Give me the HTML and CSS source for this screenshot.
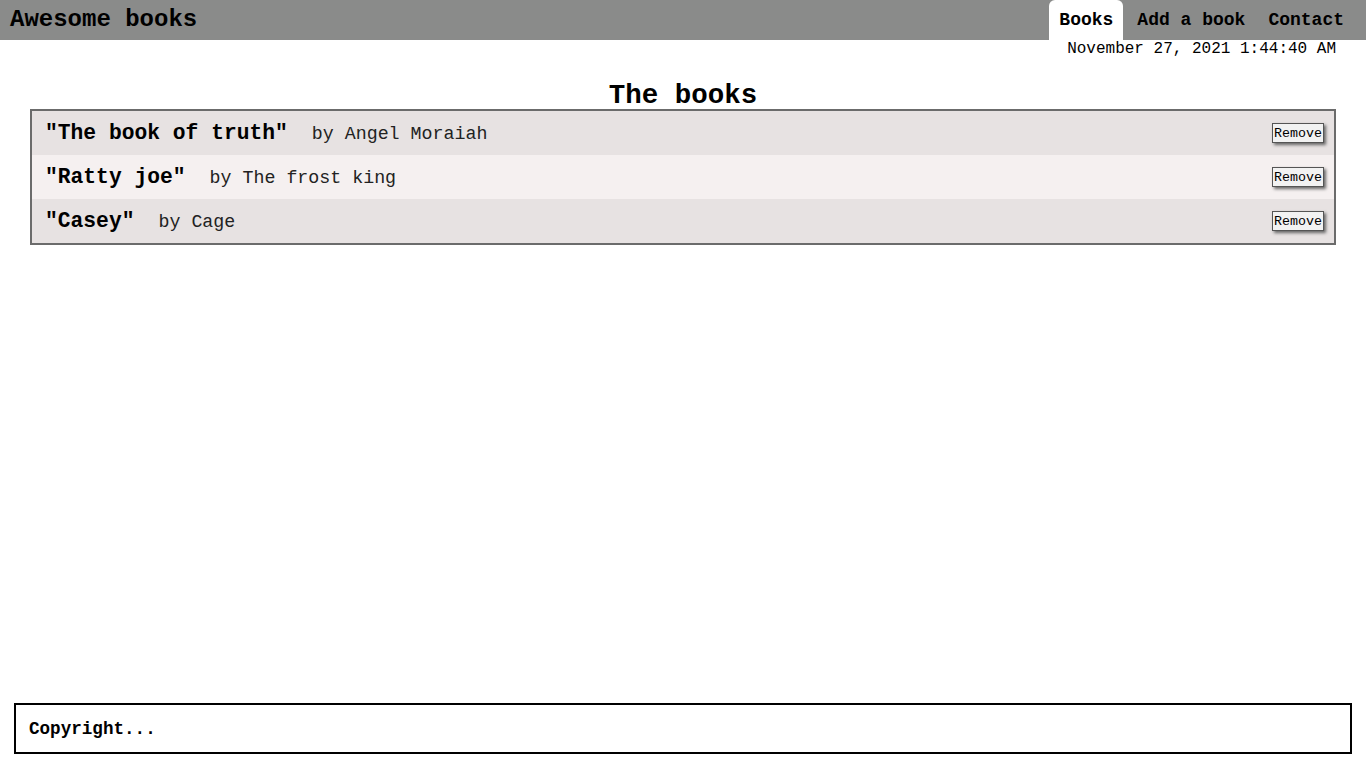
FILE: index.html
```html
<!DOCTYPE html>
<html lang="en">
<head>
<meta charset="utf-8">
<title>Awesome books</title>
<link rel="stylesheet" href="styles.css">
</head>
<body>
<header class="topbar">
  <h1 class="logo">Awesome books</h1>
  <nav class="nav">
    <a class="tab active" href="#">Books</a>
    <a class="tab" href="#">Add a book</a>
    <a class="tab" href="#">Contact</a>
  </nav>
</header>
<div class="date">November 27, 2021 1:44:40 AM</div>
<main class="main">
  <h2 class="title">The books</h2>
  <ul class="books">
    <li class="book">
      <div class="info"><span class="book-title">"The book of truth"</span><span class="author">by Angel Moraiah</span></div>
      <button class="remove">Remove</button>
    </li>
    <li class="book">
      <div class="info"><span class="book-title">"Ratty joe"</span><span class="author">by The frost king</span></div>
      <button class="remove">Remove</button>
    </li>
    <li class="book">
      <div class="info"><span class="book-title">"Casey"</span><span class="author">by Cage</span></div>
      <button class="remove">Remove</button>
    </li>
  </ul>
</main>
<footer class="footer">Copyright...</footer>
</body>
</html>
```
FILE: styles.css
```css
* { box-sizing: border-box; }
html, body { height: 100%; }
body {
  margin: 0;
  font-family: "Liberation Mono", "Courier New", monospace;
  color: #000;
  background: #fff;
  display: flex;
  flex-direction: column;
}
.topbar {
  height: 40px;
  background: #8a8b8a;
  display: flex;
  align-items: stretch;
  justify-content: space-between;
  padding: 0 12px 0 10px;
}
.logo {
  margin: 0;
  font-size: 24px;
  font-weight: bold;
  line-height: 40px;
}
.nav {
  display: flex;
  align-items: flex-end;
  gap: 3px;
}
.tab {
  display: block;
  height: 40px;
  line-height: 40px;
  padding: 0 10px;
  font-size: 18px;
  font-weight: bold;
  color: #000;
  text-decoration: none;
  border-radius: 6px 6px 0 0;
}
.tab.active { background: #fff; margin-right: 1px; }
.date {
  font-size: 16px;
  padding: 0 30px 0 0;
  line-height: 18px;
  height: 38px;
  display: flex;
  justify-content: flex-end;
  align-items: flex-start;
}
.main {
  flex: 1;
  padding: 0 30px;
}
.title {
  margin: 0;
  text-align: center;
  font-size: 27.5px;
  line-height: 31px;
  padding-top: 2px;
  height: 31px;
  font-weight: bold;
}
.books {
  list-style: none;
  margin: 0;
  padding: 0;
  border: 2px solid #6b6b6b;
}
.book {
  height: 44px;
  display: flex;
  align-items: center;
  justify-content: space-between;
  padding: 0 10px 0 13px;
  background: #e7e2e2;
}
.book:nth-child(even) { background: #f5f0f0; }
.info { display: flex; align-items: baseline; gap: 24px; }
.book-title { font-size: 21.3px; font-weight: bold; }
.author { font-size: 18.3px; color: #222; }
.remove {
  font-family: "Liberation Mono", "Courier New", monospace;
  font-size: 13.3px;
  height: 20px;
  padding: 0 1px;
  background: #f2f2f2;
  border: 1px solid #555;
  box-shadow: 2px 2px 3px #666;
  color: #000;
}
.footer {
  margin: 0 14px 14px;
  height: 51px;
  border: 2px solid #000;
  padding: 0 13px;
  display: flex;
  align-items: center;
  font-size: 17.6px;
  font-weight: bold;
}
```
